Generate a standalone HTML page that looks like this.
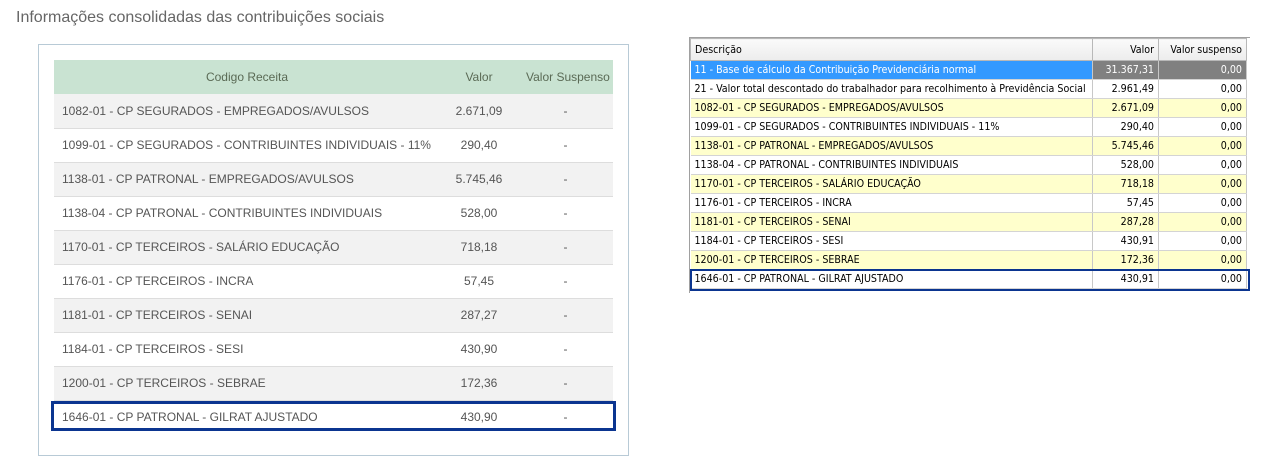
<!DOCTYPE html>
<html><head><meta charset="utf-8"><style>
*{margin:0;padding:0;box-sizing:border-box}
body{width:1272px;height:468px;background:#fff;position:relative;overflow:hidden;font-family:"Liberation Sans",Arial,sans-serif}
.title{position:absolute;left:16px;top:9px;font-size:16px;color:#666}
.panel{position:absolute;left:38px;top:44px;width:591px;height:412px;border:1px solid #b8cad6}
.lt{position:absolute;left:54px;top:60px;width:559px;border-collapse:collapse;font-size:12px;color:#555;table-layout:fixed}
.lt td,.lt th{height:34px;padding:0 8px;border-bottom:1px solid #ddd;white-space:nowrap;overflow:hidden}
.lt th{background:#c9e3d2;font-weight:normal;color:#5a6a55;border:none}
.lt tr:nth-child(even) td{background:#f2f2f2}
.lt tr:nth-child(odd) td{background:#fff}
.box{position:absolute;left:51px;top:401px;width:565px;height:30px;border:3px solid #0b3590}
.rt{position:absolute;left:690px;top:38px;border-collapse:collapse;font-size:10.6px;color:#000;font-family:"DejaVu Sans Condensed","DejaVu Sans",sans-serif;table-layout:fixed;width:556px}
.wrap{position:absolute;left:689px;top:37px;width:561px;height:1px;background:#a0a0a0}
.wrapl{position:absolute;left:689px;top:37px;width:1px;height:256px;background:#a0a0a0}
.rt td,.rt th{height:19px;padding:0 4px;border-right:1px solid #c8c8c8;border-bottom:1px solid #d4d4d4;white-space:nowrap;overflow:hidden}
.rt th{height:22px;background:linear-gradient(#fafafa,#ececec);font-weight:normal;border:1px solid #b8b8b8}
.rt td.n{text-align:right}
.rt tr.y td{background:#ffffcc}
.rt tr.s td{background:#3399ff;color:#fff}
.rt tr.s td.n{background:#808080}
.rbox{position:absolute;left:690px;top:269px;width:560px;height:22px;border:2px solid #0b3590}
</style></head><body>
<div class="title">Informações consolidadas das contribuições sociais</div>
<div class="panel"></div>
<table class="lt">
<colgroup><col style="width:386px"><col style="width:78px"><col></colgroup>
<tr><th style="text-align:center">Codigo Receita</th><th>Valor</th><th style="text-align:center">Valor Suspenso</th></tr>
<tr><td>1082-01 - CP SEGURADOS - EMPREGADOS/AVULSOS</td><td style="text-align:center">2.671,09</td><td style="text-align:center">-</td></tr>
<tr><td>1099-01 - CP SEGURADOS - CONTRIBUINTES INDIVIDUAIS - 11%</td><td style="text-align:center">290,40</td><td style="text-align:center">-</td></tr>
<tr><td>1138-01 - CP PATRONAL - EMPREGADOS/AVULSOS</td><td style="text-align:center">5.745,46</td><td style="text-align:center">-</td></tr>
<tr><td>1138-04 - CP PATRONAL - CONTRIBUINTES INDIVIDUAIS</td><td style="text-align:center">528,00</td><td style="text-align:center">-</td></tr>
<tr><td>1170-01 - CP TERCEIROS - SALÁRIO EDUCAÇÃO</td><td style="text-align:center">718,18</td><td style="text-align:center">-</td></tr>
<tr><td>1176-01 - CP TERCEIROS - INCRA</td><td style="text-align:center">57,45</td><td style="text-align:center">-</td></tr>
<tr><td>1181-01 - CP TERCEIROS - SENAI</td><td style="text-align:center">287,27</td><td style="text-align:center">-</td></tr>
<tr><td>1184-01 - CP TERCEIROS - SESI</td><td style="text-align:center">430,90</td><td style="text-align:center">-</td></tr>
<tr><td>1200-01 - CP TERCEIROS - SEBRAE</td><td style="text-align:center">172,36</td><td style="text-align:center">-</td></tr>
<tr><td style="border:none">1646-01 - CP PATRONAL - GILRAT AJUSTADO</td><td style="text-align:center;border:none">430,90</td><td style="text-align:center;border:none">-</td></tr>
</table>
<div class="box"></div>

<div class="wrap"></div><div class="wrapl"></div>
<table class="rt">
<colgroup><col style="width:402px"><col style="width:66px"><col style="width:88px"></colgroup>
<tr><th style="text-align:left">Descrição</th><th style="text-align:right">Valor</th><th style="text-align:right">Valor suspenso</th></tr>
<tr class="s"><td>11 - Base de cálculo da Contribuição Previdenciária normal</td><td class="n">31.367,31</td><td class="n">0,00</td></tr>
<tr><td>21 - Valor total descontado do trabalhador para recolhimento à Previdência Social</td><td class="n">2.961,49</td><td class="n">0,00</td></tr>
<tr class="y"><td>1082-01 - CP SEGURADOS - EMPREGADOS/AVULSOS</td><td class="n">2.671,09</td><td class="n">0,00</td></tr>
<tr><td>1099-01 - CP SEGURADOS - CONTRIBUINTES INDIVIDUAIS - 11%</td><td class="n">290,40</td><td class="n">0,00</td></tr>
<tr class="y"><td>1138-01 - CP PATRONAL - EMPREGADOS/AVULSOS</td><td class="n">5.745,46</td><td class="n">0,00</td></tr>
<tr><td>1138-04 - CP PATRONAL - CONTRIBUINTES INDIVIDUAIS</td><td class="n">528,00</td><td class="n">0,00</td></tr>
<tr class="y"><td>1170-01 - CP TERCEIROS - SALÁRIO EDUCAÇÃO</td><td class="n">718,18</td><td class="n">0,00</td></tr>
<tr><td>1176-01 - CP TERCEIROS - INCRA</td><td class="n">57,45</td><td class="n">0,00</td></tr>
<tr class="y"><td>1181-01 - CP TERCEIROS - SENAI</td><td class="n">287,28</td><td class="n">0,00</td></tr>
<tr><td>1184-01 - CP TERCEIROS - SESI</td><td class="n">430,91</td><td class="n">0,00</td></tr>
<tr class="y"><td>1200-01 - CP TERCEIROS - SEBRAE</td><td class="n">172,36</td><td class="n">0,00</td></tr>
<tr><td>1646-01 - CP PATRONAL - GILRAT AJUSTADO</td><td class="n">430,91</td><td class="n">0,00</td></tr>
</table>
<div class="rbox"></div>
</body></html>
